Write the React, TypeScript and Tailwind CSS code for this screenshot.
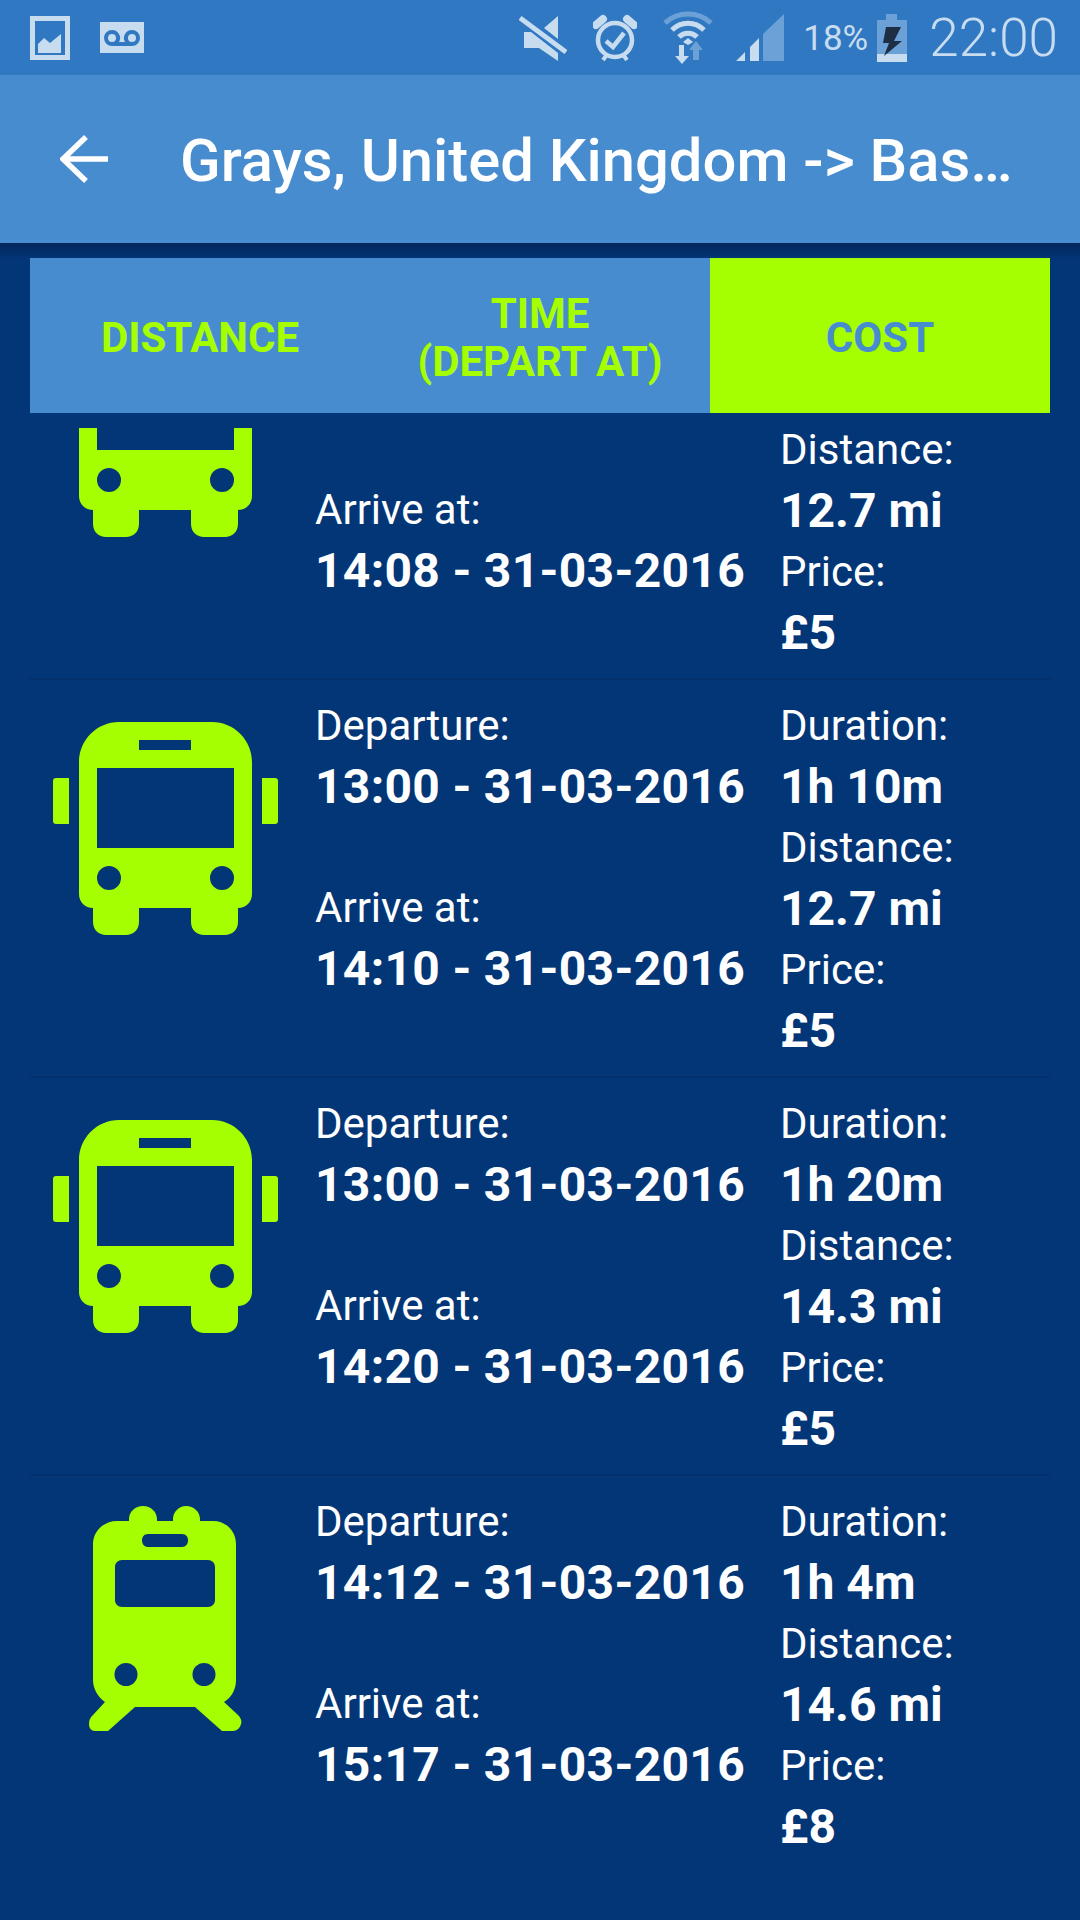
const LIME = "#a6ff00";

function BusIcon() {
  return (
    <svg width="270" height="250" viewBox="0 0 270 250" className="block">
      <path
        fill={LIME}
        fillRule="evenodd"
        d="M89 22H182C204 22 222 40 222 62V194C222 202 216 208 208 208V222C208 230 202 235 195 235H174C167 235 161 230 161 222V208H109V222C109 230 103 235 96 235H76C69 235 63 230 63 222V208C55 208 49 202 49 194V62C49 40 67 22 89 22ZM109 40V50H161V40ZM67 68V148H204V68ZM79 166A12 12 0 1 0 79 190A12 12 0 1 0 79 166ZM192 166A12 12 0 1 0 192 190A12 12 0 1 0 192 166Z"
      />
      <path fill={LIME} d="M26 78H39V124H26C24 124 23 123 23 121V81C23 79 24 78 26 78ZM232 78H245C247 78 248 79 248 81V121C248 123 247 124 245 124H232Z" />
    </svg>
  );
}

function TrainIcon() {
  return (
    <svg width="220" height="250" viewBox="0 0 220 250" className="block">
      <path
        fill={LIME}
        fillRule="evenodd"
        d="M57 31H69V29C69 22 75 16 83 16C91 16 97 22 97 29V31H113V29C113 22 119 16 126 16C134 16 140 22 140 29V31H153C166 31 176 41 176 54V190C176 199 172 207 164 212L178 225C181 228 182 231 181 234C180 238 177 241 173 241H162L135 217H75L48 241H35C31 241 29 238 29 234C29 230 30 228 33 225L45 212C38 207 33 199 33 190V54C33 41 44 31 57 31ZM88 44C84 44 82 47 82 50C82 54 84 57 88 57H122C126 57 128 54 128 50C128 47 126 44 122 44ZM62 70C58 70 55 73 55 77V110C55 114 58 117 62 117H148C152 117 155 114 155 110V77C155 73 152 70 148 70ZM66 173A11.5 11.5 0 1 0 66 196A11.5 11.5 0 1 0 66 173ZM144 173A11.5 11.5 0 1 0 144 196A11.5 11.5 0 1 0 144 173Z"
      />
    </svg>
  );
}

function Row({ train, dep, arr, dur, dist, price, last }: { train?: boolean; dep: string; arr: string; dur: string; dist: string; price: string; last?: boolean }) {
  return (
    <div className={`flex h-[398px] pt-[15px] text-white text-[42px] leading-[61px] ${last ? "" : "border-b-2 border-[#03306a]"}`}>
      <div className="w-[285px] shrink-0 relative">
        <div className={train ? "absolute left-[30px] top-[-1px]" : "absolute left-0 top-[5px]"}>
          {train ? <TrainIcon /> : <BusIcon />}
        </div>
      </div>
      <div className="w-[465px] shrink-0">
        <div>Departure:</div>
        <div className="font-bold text-[48px] tracking-[0.3px] whitespace-nowrap">{dep}</div>
        <div className="mt-[60px]">Arrive at:</div>
        <div className="font-bold text-[48px] tracking-[0.3px] whitespace-nowrap">{arr}</div>
      </div>
      <div>
        <div>Duration:</div>
        <div className="font-bold text-[48px]">{dur}</div>
        <div>Distance:</div>
        <div className="font-bold text-[48px]">{dist}</div>
        <div>Price:</div>
        <div className="font-bold text-[48px]">{price}</div>
      </div>
    </div>
  );
}

function StatusIcons() {
  const c = "#c8dcf0";
  const d = "#6ba1d6";
  return (
    <div className="flex items-center">
      <svg width="48" height="46" viewBox="0 0 48 46" className="mr-[26px]">
        <path fill={c} d="M39 1V24L25 13ZM5 17H12L39 38V46L20 33H5Z" />
        <path stroke={c} strokeWidth="5" d="M1 3L47 37" />
      </svg>
      <svg width="44" height="48" viewBox="0 0 44 48" className="mr-[26px]">
        <circle cx="22" cy="26" r="17" fill="none" stroke={c} strokeWidth="4.5" />
        <path fill="none" stroke={c} strokeWidth="4.5" d="M13 27L20 33L31 19" />
        <path stroke={c} strokeWidth="8" strokeLinecap="round" d="M3 11L10 5M41 11L34 5" />
        <path stroke={c} strokeWidth="4" d="M10 46L13 42M34 46L31 42" />
      </svg>
      <svg width="50" height="54" viewBox="0 0 50 54" className="mr-[23px]">
        <path fill="none" stroke={d} strokeWidth="5" d="M2 12C15 0 35 0 48 12" />
        <path fill="none" stroke={c} strokeWidth="5" d="M9 19C18 10 32 10 41 19" />
        <path fill="none" stroke={c} strokeWidth="5" d="M16 26C21 21 29 21 34 26" />
        <path fill={c} d="M25 27L30 31L25 34L20 31Z" />
        <path fill={c} d="M16 34H21V45H26L19 53L12 45H16Z" />
        <path fill={d} d="M33 30L40 39H36V49H30V39H26Z" />
      </svg>
      <svg width="48" height="47" viewBox="0 0 48 47" className="mr-[19px]">
        <path fill={c} d="M0 47L9 38V47ZM14 33L23 24V47H14Z" />
        <path fill={d} d="M27 20L48 0V47H27Z" />
      </svg>
      <span className="text-[#c8dcf0] text-[35px] leading-none font-['Roboto'] mr-[9px] pt-[1px]">18%</span>
      <svg width="30" height="48" viewBox="0 0 30 48" className="mr-[22px]">
        <path fill={d} d="M9 0H20V6H30V48H0V6H9Z" />
        <rect x="0" y="40" width="30" height="8" fill={c} />
        <path fill="#1e2f45" d="M9 13H24L17 27H25L7 42L12 29H6Z" />
      </svg>
      <span className="text-[#c8dcf0] text-[53px] leading-none font-light font-['Roboto'] pt-[1px]">22:00</span>
    </div>
  );
}

export default function App() {
  return (
    <div className="w-[1080px] h-[1920px] overflow-hidden flex flex-col bg-[#033677] font-['Roboto',sans-serif] relative">
      <div className="h-[75px] bg-[#3079c2] flex items-center justify-between pl-[30px] pr-[22px] shrink-0">
        <div className="flex items-center gap-[30px]">
          <svg width="40" height="44" viewBox="0 0 40 44">
            <path fill="#c8dcf0" fillRule="evenodd" d="M0 0H40V44H0ZM5 5V39H35V5ZM8 33V28L14 22L20 27L31 18V37H8Z" />
          </svg>
          <svg width="44" height="31" viewBox="0 0 44 31">
            <path fill="#c8dcf0" fillRule="evenodd" d="M0 0H44V31H0ZM12 8A8 8 0 0 0 12 24H32A8 8 0 0 0 32 8A8 8 0 0 0 25 20H19A8 8 0 0 0 12 8ZM12 12A4 4 0 1 1 12 20A4 4 0 1 1 12 12ZM32 12A4 4 0 1 1 32 20A4 4 0 1 1 32 12Z" />
          </svg>
        </div>
        <StatusIcons />
      </div>
      <div className="h-[168px] bg-[#488cd0] flex items-center shrink-0 relative z-10">
        <svg width="48" height="48" viewBox="0 0 48 48" className="ml-[60px]">
          <path fill="none" stroke="#fff" strokeWidth="5.5" d="M48 24H3M26 2L3 24L26 46" />
        </svg>
        <div className="ml-[72px] w-[840px] truncate text-white text-[59.75px] font-medium leading-[68px] pt-[3px]">
          Grays, United Kingdom -&gt; Bas…
        </div>
      </div>
      <div className="flex-1 relative flex flex-col min-h-0">
        <div className="absolute top-0 left-0 right-0 h-[16px] bg-gradient-to-b from-[#02265a] to-transparent z-10" />
        <div className="mt-[15px] mx-[30px] h-[155px] flex shrink-0 font-bold text-[42px] leading-[48px] text-center uppercase">
          <div className="w-[340px] bg-[#488cd0] text-[#a6ff00] flex items-center justify-center pt-[4px]">Distance</div>
          <div className="w-[340px] bg-[#488cd0] text-[#a6ff00] flex items-center justify-center pt-[5px]">Time<br />(Depart at)</div>
          <div className="w-[340px] bg-[#a6ff00] text-[#488cd0] flex items-center justify-center pt-[4px]">Cost</div>
        </div>
        <div className="mt-[15px] mx-[30px] flex-1 overflow-hidden">
          <div className="-mt-[146px]">
            <Row dep="13:00 - 31-03-2016" arr="14:08 - 31-03-2016" dur="1h 8m" dist="12.7 mi" price="£5" />
            <Row dep="13:00 - 31-03-2016" arr="14:10 - 31-03-2016" dur="1h 10m" dist="12.7 mi" price="£5" />
            <Row dep="13:00 - 31-03-2016" arr="14:20 - 31-03-2016" dur="1h 20m" dist="14.3 mi" price="£5" />
            <Row train last dep="14:12 - 31-03-2016" arr="15:17 - 31-03-2016" dur="1h 4m" dist="14.6 mi" price="£8" />
          </div>
        </div>
      </div>
    </div>
  );
}
